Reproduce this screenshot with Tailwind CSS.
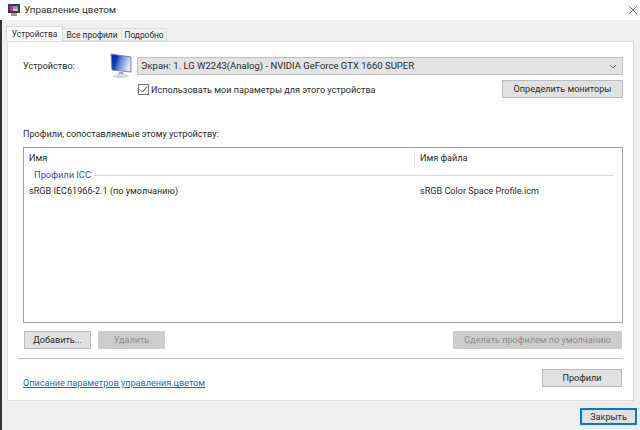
<!DOCTYPE html>
<html lang="en">

<head>
    <meta charset="UTF-8">
    <title>Управление цветом</title>
    <script src="https://cdn.jsdelivr.net/npm/@tailwindcss/browser@4"></script>
</head>

<body class="bg-[#f0f0f0] font-['Roboto','Noto_Sans',sans-serif] text-[9.1px] leading-[14px] text-[#2a2a2a] overflow-hidden">

    <div class="w-[640px] h-[430px] flex flex-col">

        <!--titlebar-->
        <div class="h-[20px] bg-white flex items-center justify-between pl-[8px] pr-[2px] shrink-0">
            <div class="flex items-center gap-[4px]">
                <svg width="12" height="12" viewBox="0 0 12 12">
                    <rect x="0" y="0" width="12" height="9" fill="#3b3d55" />
                    <rect x="2" y="2" width="3" height="5" fill="#c02bb0" />
                    <rect x="5" y="2" width="5" height="2.5" fill="#2fb8c8" />
                    <rect x="5" y="4.5" width="5" height="2.5" fill="#e8d040" />
                    <rect x="3" y="9" width="6" height="3" fill="#9a9aa5" />
                </svg>
                <span class="text-[9.9px] text-[#333]">Управление цветом</span>
            </div>
            <svg width="10" height="10" viewBox="0 0 10 10">
                <path d="M1 1 L9 9 M9 1 L1 9" stroke="#555" stroke-width="0.8" />
            </svg>
        </div>

        <div class="flex-1 flex">
            <div class="w-[2px] bg-[#333] shrink-0"></div>
            <div class="flex-1 flex flex-col">

                <!--tabs-->
                <div class="flex h-[21px] pl-[4px] items-end shrink-0 text-[8.4px]">
                    <div class="w-[57px] h-[15px] text-center bg-white border border-b-0 border-[#dcdcdc]">Устройства</div>
                    <div class="w-[59px] h-[13px] leading-[12px] text-center border border-[#dcdcdc] border-l-0">Все профили</div>
                    <div class="w-[45px] h-[13px] leading-[12px] text-center border border-[#dcdcdc] border-l-0">Подробно</div>
                </div>

                <!--panel-->
                <div class="ml-[5px] mr-[6px] h-[360px] bg-white border border-[#dcdcdc] flex flex-col pl-[15px] pr-[10px] shrink-0">

                    <div class="flex mt-[15px]">
                        <div class="w-[87px] pt-[2px]">Устройство:</div>
                        <svg width="26" height="26" viewBox="0 0 26 26" class="-mt-[4px]">
                            <defs>
                                <linearGradient id="screen" x1="0" y1="0" x2="1" y2="0.3">
                                    <stop offset="0.3" stop-color="#0a2fb0" />
                                    <stop offset="0.55" stop-color="#5f86d8" />
                                    <stop offset="1" stop-color="#dfe8f4" />
                                </linearGradient>
                            </defs>
                            <path d="M1 1 L21 4 L21 19 L2 17 Z" fill="url(#screen)" stroke="#7d8a99" stroke-width="1" />
                            <path d="M9 19 L13 19 L14 22 L8 22 Z" fill="#aab" />
                            <ellipse cx="11" cy="23" rx="8" ry="2" fill="#d8d8d8" />
                        </svg>
                        <div class="flex-1 ml-[1px]">
                            <div class="h-[18px] bg-[#e3e3e3] border border-[#c0c0c0] flex items-center justify-between pl-[3px] pr-[5px]">
                                <span class="text-[9.5px]">Экран: 1. LG W2243(Analog) - NVIDIA GeForce GTX 1660 SUPER</span>
                                <svg width="8" height="5" viewBox="0 0 8 5"><path d="M1 1 L4 4 L7 1" fill="none" stroke="#777" stroke-width="1" /></svg>
                            </div>
                            <div class="flex justify-between mt-[5px]">
                                <div class="flex items-start gap-[2px] ml-[1px] mt-[4px]">
                                    <div class="w-[11px] h-[11px] border border-[#777] bg-white flex items-center justify-center">
                                        <svg width="9" height="9" viewBox="0 0 9 9"><path d="M1 4.5 L3.5 7 L8 1.5" fill="none" stroke="#444" stroke-width="1" /></svg>
                                    </div>
                                    <span class="-mt-[1px]">Использовать мои параметры для этого устройства</span>
                                </div>
                                <div class="w-[121px] h-[18px] bg-[#e1e1e1] border border-[#bbb] flex items-center justify-center">Определить мониторы</div>
                            </div>
                        </div>
                    </div>

                    <div class="mt-[29px]">Профили, сопоставляемые этому устройству:</div>

                    <!--profile list-->
                    <div class="h-[176px] mt-[6px] border border-[#a0a2ac] flex flex-col">
                        <div class="flex h-[20px] shrink-0">
                            <div class="w-[391px] pl-[5px] pt-[3px] border-r border-[#ececec]">Имя</div>
                            <div class="flex-1 pl-[5px] pt-[3px]">Имя файла</div>
                        </div>
                        <div class="flex items-center gap-[3px] pl-[10px] pr-[8px] h-[14px]">
                            <span class="text-[9.3px] text-[#3a50a8]">Профили ICC</span>
                            <div class="flex-1 h-[1px] bg-[#cfdcec]"></div>
                        </div>
                        <div class="flex mt-[2px]">
                            <div class="w-[391px] pl-[5px]">sRGB IEC61966-2.1 (по умолчанию)</div>
                            <div class="flex-1 pl-[5px]">sRGB Color Space Profile.icm</div>
                        </div>
                    </div>

                    <div class="flex justify-between mt-[8px] pl-[1px] pr-[1px]">
                        <div class="flex gap-[7px]">
                            <div class="w-[67px] h-[18px] bg-[#e1e1e1] border border-[#bbb] flex items-center justify-center">Добавить...</div>
                            <div class="w-[67px] h-[18px] bg-[#cccccc] text-[#8c8c8c] flex items-center justify-center">Удалить</div>
                        </div>
                        <div class="w-[169px] h-[18px] bg-[#cccccc] text-[#8c8c8c] flex items-center justify-center">Сделать профилем по умолчанию</div>
                    </div>

                    <div class="h-[1px] bg-[#bbb] -ml-[5px] mt-[9px]"></div>

                    <div class="flex justify-between items-start mt-[10px] pr-[1px]">
                        <a href="#" class="mt-[7px] text-[#1a6fb8] underline">Описание параметров управления цветом</a>
                        <div class="w-[80px] h-[18px] bg-[#e1e1e1] border border-[#bbb] flex items-center justify-center">Профили</div>
                    </div>
                </div>

                <!--footer-->
                <div class="flex justify-end pr-[3px] pt-[7px]">
                    <div class="w-[57px] h-[17px] bg-[#e1e1e1] border-2 border-[#0078d7] flex items-center justify-center">Закрыть</div>
                </div>
            </div>
        </div>
    </div>

</body>

</html>
